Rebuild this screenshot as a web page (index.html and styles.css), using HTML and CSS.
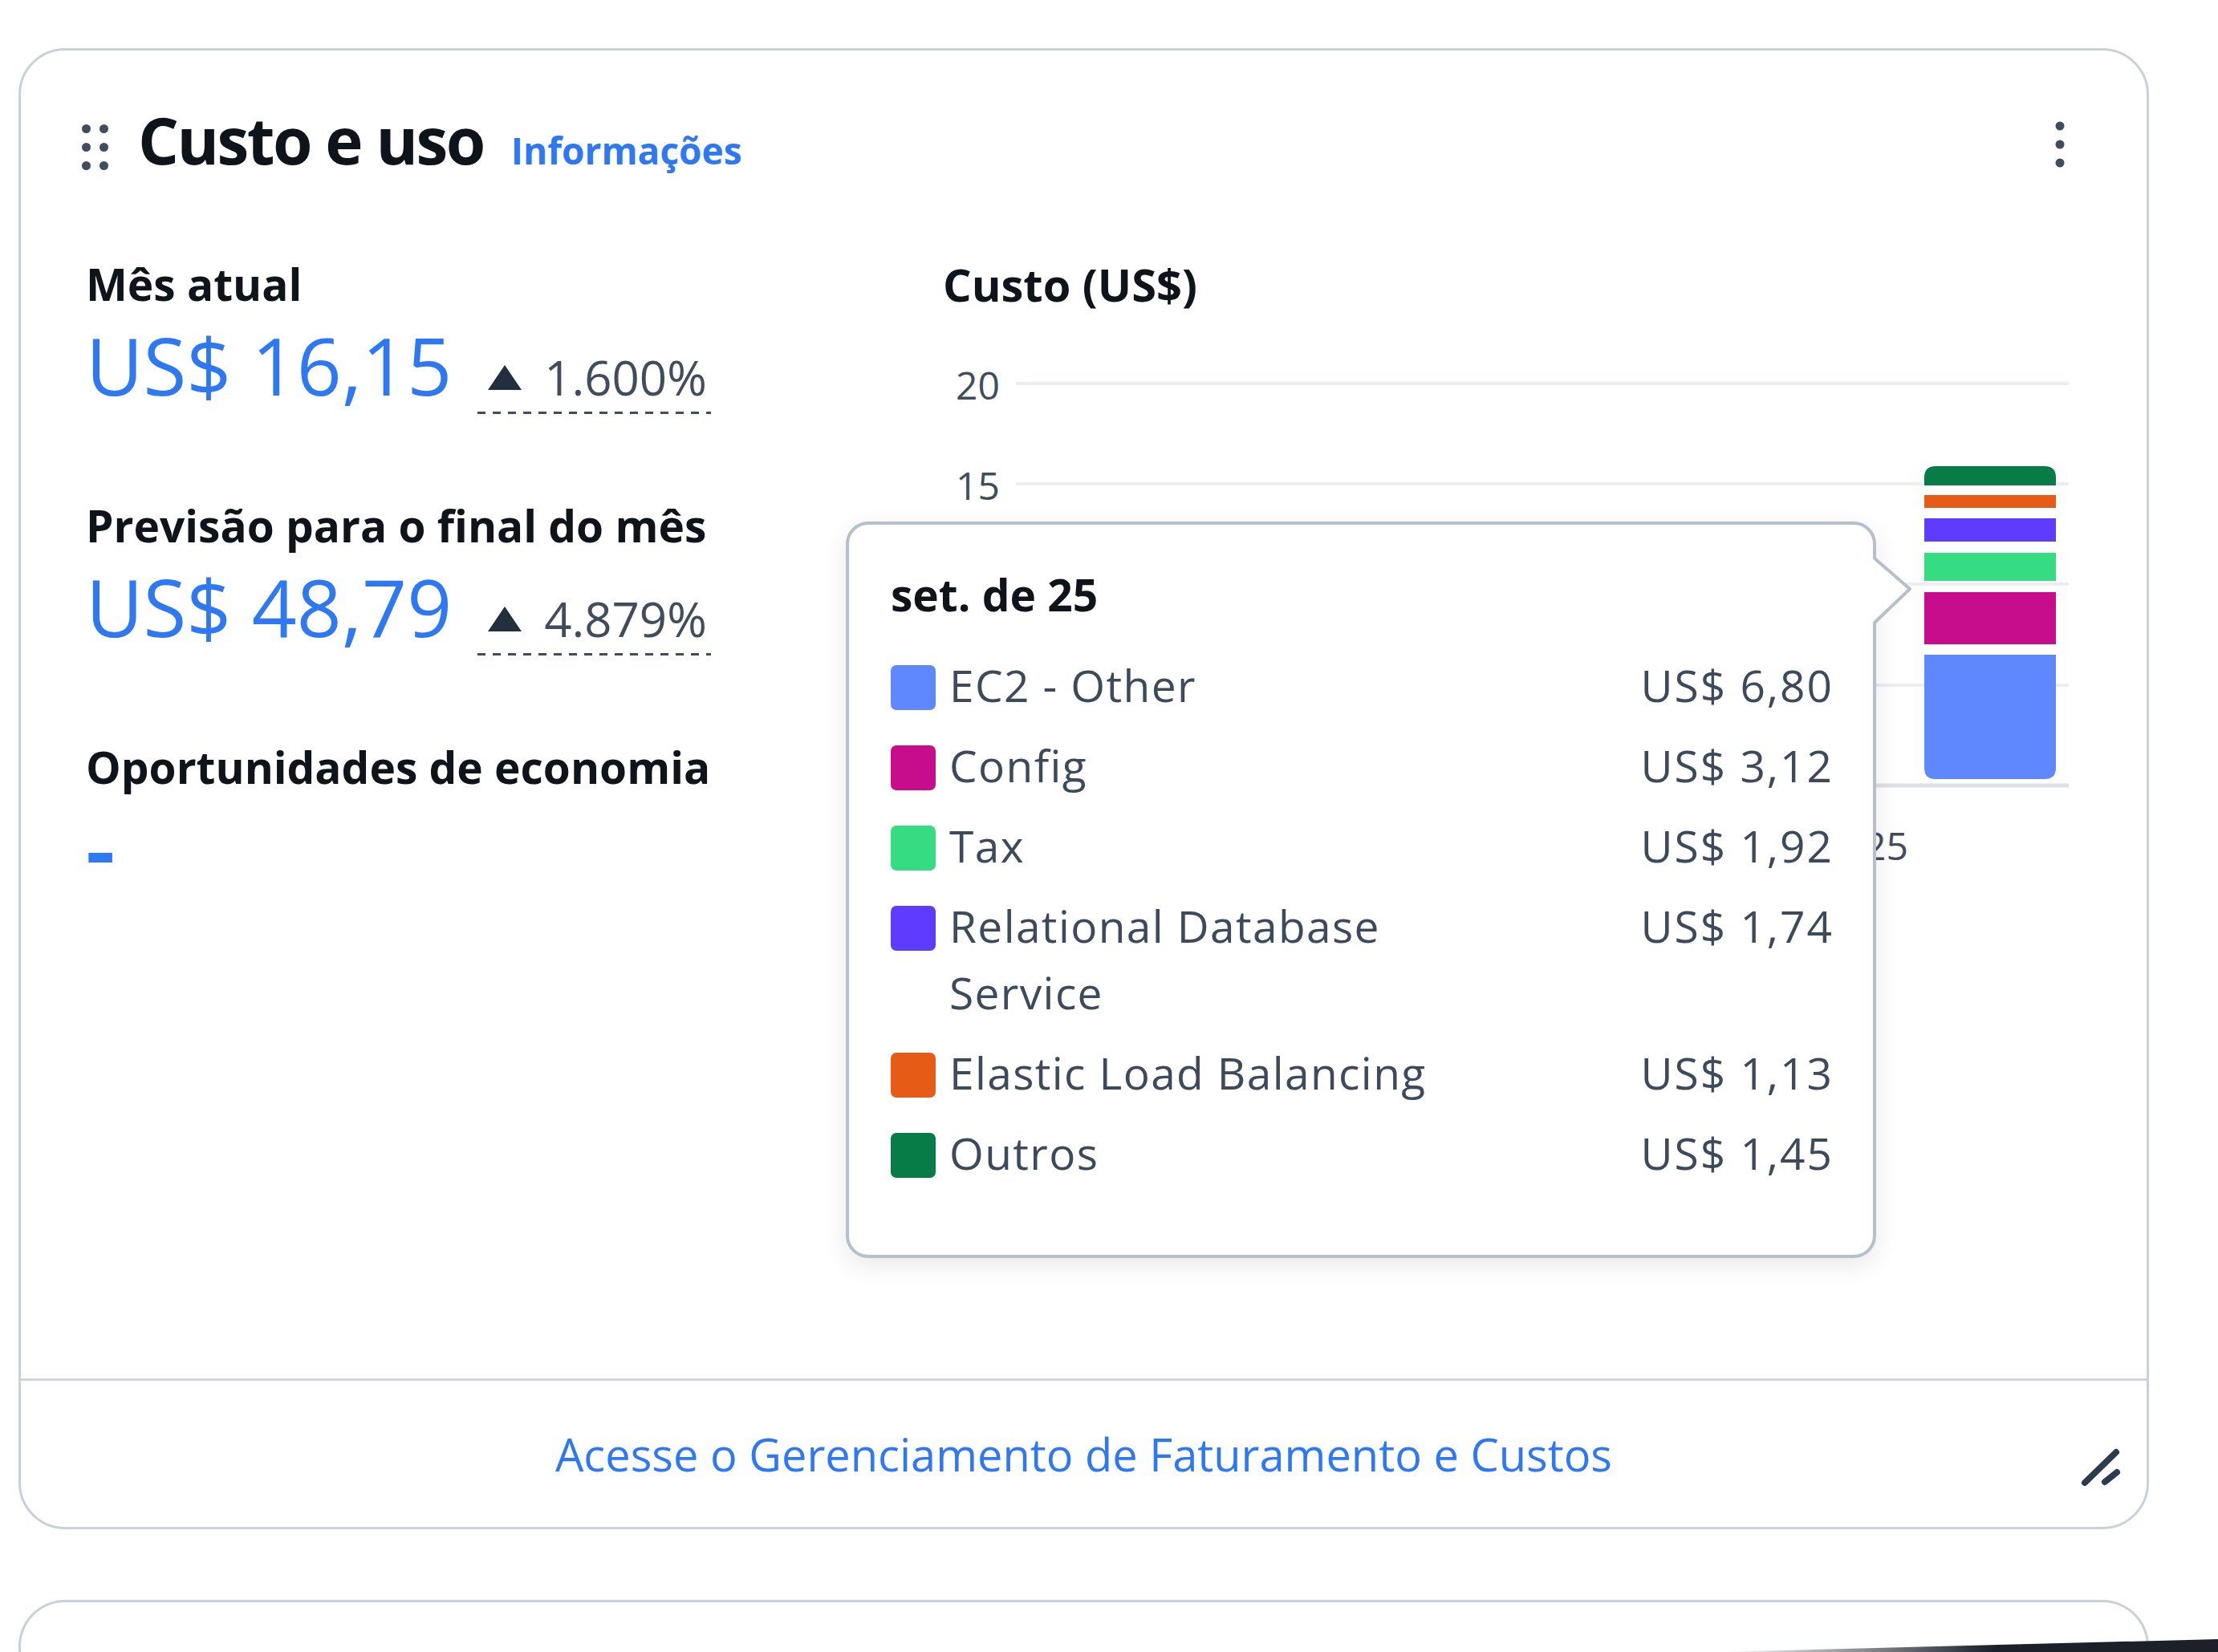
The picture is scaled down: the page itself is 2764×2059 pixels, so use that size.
FILE: index.html
```html
<!DOCTYPE html>
<html lang="pt-BR">
<head>
<meta charset="utf-8">
<title>Custo e uso</title>
<link rel="stylesheet" href="styles.css">
</head>
<body>
<div class="page">
  <section class="card">
    <header class="card-header">
      <svg class="drag" width="34" height="57" viewBox="0 0 34 57" aria-hidden="true">
        <circle cx="5.5" cy="5.5" r="5.5"/><circle cx="27.5" cy="5.5" r="5.5"/>
        <circle cx="5.5" cy="28.5" r="5.5"/><circle cx="27.5" cy="28.5" r="5.5"/>
        <circle cx="5.5" cy="51.5" r="5.5"/><circle cx="27.5" cy="51.5" r="5.5"/>
      </svg>
      <div class="title-group">
        <h2 class="title">Custo e uso</h2><a class="info" href="#">Informações</a>
      </div>
      <svg class="kebab" width="12" height="58" viewBox="0 0 12 58" aria-hidden="true">
        <circle cx="6" cy="6" r="5.5"/><circle cx="6" cy="29" r="5.5"/><circle cx="6" cy="52" r="5.5"/>
      </svg>
    </header>

    <div class="card-body">
      <div class="metrics">
        <div class="metric">
          <div class="metric-label">Mês atual</div>
          <div class="metric-value"><a class="amount" href="#">US$ 16,15</a><span class="delta"><svg class="tri" width="42" height="31" viewBox="0 0 42 31"><polygon points="21,0 42,31 0,31"/></svg>1.600%</span></div>
        </div>
        <div class="metric">
          <div class="metric-label">Previsão para o final do mês</div>
          <div class="metric-value"><a class="amount" href="#">US$ 48,79</a><span class="delta"><svg class="tri" width="42" height="31" viewBox="0 0 42 31"><polygon points="21,0 42,31 0,31"/></svg>4.879%</span></div>
        </div>
        <div class="metric">
          <div class="metric-label">Oportunidades de economia</div>
          <div class="metric-value"><a class="amount amount-empty" href="#">-</a></div>
        </div>
      </div>

      <div class="chart">
        <div class="chart-title">Custo (US$)</div>
        <svg class="plot" width="1425" height="700" viewBox="0 0 1425 700">
          <g class="grid">
            <line x1="91" y1="88" x2="1403" y2="88"/>
            <line x1="91" y1="213" x2="1403" y2="213"/>
            <line x1="91" y1="338" x2="1403" y2="338"/>
            <line x1="91" y1="464" x2="1403" y2="464"/>
          </g>
          <line class="axis" x1="91" y1="589" x2="1403" y2="589"/>
          <g class="ylabels">
            <text x="71" y="108">20</text>
            <text x="71" y="233">15</text>
          </g>
          <text class="xlabel" x="1203" y="682">set. de 25</text>
          <path fill="#077c47" d="M1223,215 V205 Q1223,191 1237,191 H1373 Q1387,191 1387,205 V215 Z"/>
          <rect fill="#e65c17" x="1223" y="227" width="164" height="16"/>
          <rect fill="#5e3bff" x="1223" y="256" width="164" height="29"/>
          <rect fill="#35dc81" x="1223" y="299" width="164" height="35"/>
          <rect fill="#c70d8b" x="1223" y="348" width="164" height="65"/>
          <path fill="#5f88ff" d="M1223,426 H1387 V567 Q1387,581 1373,581 H1237 Q1223,581 1223,567 Z"/>
        </svg>
      </div>
    </div>

    <footer class="card-footer">
      <a class="footer-link" href="#">Acesse o Gerenciamento de Faturamento e Custos</a>
    </footer>

    <svg class="resize" width="56" height="56" viewBox="0 0 56 56" aria-hidden="true">
      <line x1="8" y1="48" x2="47" y2="10"/>
      <line x1="33" y1="47" x2="48" y2="35"/>
    </svg>

    <div class="tooltip">
      <svg class="tip-arrow" width="50" height="92" viewBox="0 0 50 92" aria-hidden="true">
        <polygon class="arrow-fill" points="0,7 2,7 46,44 2,85 0,85"/>
        <polyline class="arrow-line" points="2,6 46,44 2,86"/>
      </svg>
      <div class="tip-title">set. de 25</div>
      <div class="tip-rows">
        <div class="tip-row"><span class="swatch sw-ec2"></span><span class="tip-name">EC2 - Other</span><span class="tip-value">US$ 6,80</span></div>
        <div class="tip-row"><span class="swatch sw-config"></span><span class="tip-name">Config</span><span class="tip-value">US$ 3,12</span></div>
        <div class="tip-row"><span class="swatch sw-tax"></span><span class="tip-name">Tax</span><span class="tip-value">US$ 1,92</span></div>
        <div class="tip-row"><span class="swatch sw-rds"></span><span class="tip-name">Relational Database Service</span><span class="tip-value">US$ 1,74</span></div>
        <div class="tip-row"><span class="swatch sw-elb"></span><span class="tip-name">Elastic Load Balancing</span><span class="tip-value">US$ 1,13</span></div>
        <div class="tip-row"><span class="swatch sw-other"></span><span class="tip-name">Outros</span><span class="tip-value">US$ 1,45</span></div>
      </div>
    </div>
  </section>

  <section class="card card-next"></section>
</div>
<div class="edge"></div>
</body>
</html>
```

FILE: styles.css
```css
* { box-sizing: border-box; }

html, body {
  margin: 0;
  height: 2059px;
  overflow: hidden;
  background: #ffffff;
}

body {
  font-family: "Open Sans", "Noto Sans", sans-serif;
  color: #0f141a;
}

.page {
  padding: 60px 0 0 23px;
}

.card {
  position: relative;
  width: 2655px;
  height: 1846px;
  border: 3px solid #c8d0d9;
  border-radius: 58px;
  background: #ffffff;
  display: flex;
  flex-direction: column;
}

/* header */
.card-header {
  display: flex;
  align-items: flex-start;
  padding: 61px 102px 0 76px;
}

.drag {
  flex: none;
  margin-top: 31px;
  fill: #414d5c;
}

.title-group {
  flex: 1;
  margin-left: 36px;
  font-size: 80px;
  line-height: 100px;
  height: 100px;
  white-space: nowrap;
}

.title {
  display: inline;
  margin: 0;
  font-size: 80px;
  font-weight: 700;
  letter-spacing: -2.5px;
  color: #0f141a;
}

.info {
  margin-left: 34px;
  font-size: 46px;
  line-height: 1;
  font-weight: 700;
  color: #2f78f4;
  text-decoration: none;
}

.kebab {
  flex: none;
  margin-top: 27px;
  fill: #414d5c;
}

/* body */
.card-body {
  flex: 1;
  display: grid;
  grid-template-columns: 1068px 1fr;
  padding: 94px 0 0 81px;
}

.metric + .metric {
  margin-top: 103px;
}

.metric-label {
  font-size: 55px;
  font-weight: 700;
  line-height: 72px;
  white-space: nowrap;
}

.metric-value {
  margin-top: 5px;
  font-size: 98px;
  line-height: 120px;
  white-space: nowrap;
}

.amount {
  font-size: 98px;
  color: #2f78f4;
  text-decoration: none;
}

.amount-empty {
  display: inline-block;
  line-height: 1;
  font-weight: 700;
  transform: scaleX(1.15);
  transform-origin: 0 50%;
}

.delta {
  display: inline-block;
  margin-left: 32px;
  padding: 0 5px 5px 13px;
  font-size: 60px;
  line-height: normal;
  color: #414d5c;
  background: repeating-linear-gradient(90deg, #414d5c 0 10px, transparent 10px 19px) left bottom / 100% 3px no-repeat;
}

.tri {
  vertical-align: 7px;
  margin-right: 28px;
  fill: #232f3e;
}

/* chart */
.chart-title {
  font-size: 56px;
  font-weight: 700;
  line-height: 72px;
}

.plot {
  display: block;
}

.grid line {
  stroke: #eceef1;
  stroke-width: 4;
}

.axis {
  stroke: #dde1e6;
  stroke-width: 5;
}

.ylabels text,
.xlabel {
  font-family: "Open Sans", "Noto Sans", sans-serif;
  font-size: 48px;
  fill: #414d5c;
  text-anchor: end;
}

/* footer */
.card-footer {
  flex: none;
  height: 185px;
  border-top: 3px solid #cdd4dc;
  display: flex;
  align-items: center;
  justify-content: center;
}

.footer-link {
  font-size: 56px;
  line-height: 72px;
  color: #2f78f4;
  text-decoration: none;
}

.resize {
  position: absolute;
  left: 2564px;
  top: 1737px;
  stroke: #2d3b4e;
  stroke-width: 8;
  stroke-linecap: round;
}

/* tooltip */
.tooltip {
  position: absolute;
  left: 1028px;
  top: 587px;
  width: 1284px;
  height: 918px;
  padding: 51px 51px 0 52px;
  background: #ffffff;
  border: 4px solid #b6c0cb;
  border-radius: 28px;
  box-shadow: 0 10px 32px rgba(0, 7, 22, 0.09);
  color: #3d4a5b;
  z-index: 2;
}

.tip-arrow {
  position: absolute;
  left: 1276px;
  top: 36px;
  overflow: visible;
}

.arrow-fill {
  fill: #ffffff;
}

.arrow-line {
  fill: none;
  stroke: #b6c0cb;
  stroke-width: 4;
  stroke-linejoin: round;
}

.tip-title {
  font-size: 55px;
  font-weight: 700;
  line-height: 72px;
  color: #0f141a;
  margin-bottom: 35px;
}

.tip-rows {
  display: flex;
  flex-direction: column;
  gap: 17px;
}

.tip-row {
  display: grid;
  grid-template-columns: 56px 640px 1fr;
  column-gap: 17px;
  align-items: start;
  font-size: 55px;
  line-height: 83px;
  letter-spacing: 1.4px;
}

.swatch {
  display: block;
  width: 56px;
  height: 56px;
  margin-top: 17px;
  border-radius: 7px;
}

.sw-ec2 { background: #5f88ff; }
.sw-config { background: #c70d8b; }
.sw-tax { background: #35dc81; }
.sw-rds { background: #5e3bff; }
.sw-elb { background: #e65c17; }
.sw-other { background: #077c47; }

.tip-value {
  text-align: right;
  white-space: nowrap;
  letter-spacing: 2px;
  margin-right: -2px;
}

/* next card */
.card-next {
  margin-top: 88px;
  height: 80px;
  border-bottom: none;
  border-radius: 58px 58px 0 0;
}

.edge {
  position: fixed;
  right: 0;
  bottom: 0;
  width: 620px;
  height: 16px;
  background: linear-gradient(90deg, rgba(27, 32, 41, 0) 0%, #1b2029 55%);
  clip-path: polygon(0 100%, 100% 0, 100% 100%);
}
```
